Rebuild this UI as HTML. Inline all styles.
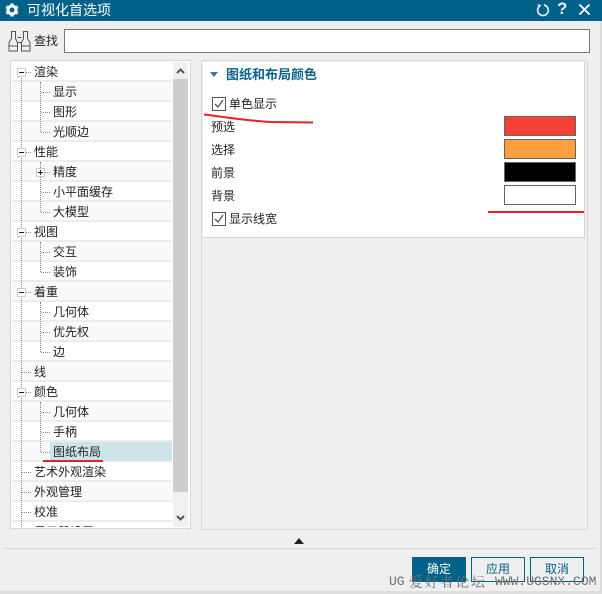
<!DOCTYPE html>
<html><head><meta charset="utf-8">
<style>
html,body{margin:0;padding:0}
body{width:602px;height:594px;overflow:hidden;position:relative;background:#efefef;font-family:"Liberation Sans","Noto Sans CJK SC",sans-serif;font-size:12px;color:#222}
.a{position:absolute}
.t{position:absolute;white-space:nowrap;line-height:16px;font-size:12px}
.row{position:absolute;left:12px;width:160px;height:18px;border-bottom:2px solid #ececec}
.sw{position:absolute;left:504px;width:70px;height:18px;border:1px solid #666}
.btn{position:absolute;top:557px;height:23px;border:1px solid #006288;line-height:23px;text-align:center;color:#006288;font-size:12px;width:52px}
.cb{position:absolute;left:212px;width:12px;height:12px;border:1px solid #555;background:#fff}
.v{position:absolute;border-left:1px dotted #888;width:0}
.h{position:absolute;border-top:1px dotted #888;height:0}
.x{position:absolute;width:7px;height:7px;border:1px solid #ccc;background:#fff;left:17px}
.x:after{content:"";position:absolute;left:1px;top:3px;width:5px;height:1px;background:#222}
.p:before{content:"";position:absolute;left:3px;top:1px;width:1px;height:5px;background:#222}
.wm{position:absolute;white-space:nowrap;color:#707070;line-height:16px;top:574px}
</style></head><body>
<div class="a" style="left:0;top:0;width:602px;height:21px;background:#006288"></div>
<svg class="a" style="left:4px;top:2px" width="16" height="16" viewBox="0 0 16 16"><circle cx="8" cy="8" r="4" fill="none" stroke="#fff" stroke-width="3"/><path d="M8 1.500v2.500M8 12v2.500M2.300 4.700l2.200 1.300M11.500 10l2.200 1.300M2.300 11.300L4.500 10M11.500 6l2.200-1.300" stroke="#fff" stroke-width="3"/></svg>
<div class="t" style="left:27px;top:1px;color:#fff;font-size:14px;line-height:18px">可视化首选项</div>
<svg class="a" style="left:535px;top:2px" width="16" height="16" viewBox="0 0 16 16"><path d="M4.500 4.200A5.300 5.300 0 1 0 9 3" fill="none" stroke="#dfeaf0" stroke-width="1.700"/><path d="M2.500 2.200l4 .8-2.600 3z" fill="#dfeaf0"/></svg>
<div class="t" style="left:557px;top:0px;color:#e8f0f4;font-size:17px;line-height:18px;font-weight:bold">?</div>
<svg class="a" style="left:578px;top:3px" width="13" height="13" viewBox="0 0 13 13"><path d="M1.500 1.500l10 10M11.500 1.500l-10 10" stroke="#fff" stroke-width="1.900"/></svg>
<div class="a" style="left:600px;top:21px;width:2px;height:573px;background:#dcdcdc"></div>
<div class="a" style="left:0;top:591px;width:602px;height:3px;background:#dedede"></div>

<svg class="a" style="left:8px;top:29px" width="25" height="24" viewBox="0 0 25 24" fill="none" stroke="#555" stroke-width="1"><path d="M3.500 2.500h4v7l2 4v8.500h-8.500v-8.500l2.500-4z"/><path d="M1 17h8.500"/><path d="M15.500 2.500h4v7l2.500 4v8.500h-8.500v-8.500l2-4z"/><path d="M13.500 17h8.500"/><path d="M9.500 8.500h4M9.500 13.500h4"/></svg>
<div class="t" style="left:34px;top:33px">查找</div>
<div class="a" style="left:64px;top:29px;width:524px;height:22px;background:#fff;border:1px solid #777"></div>

<!-- tree -->
<div class="a" style="left:10px;top:60px;width:179px;height:467px;background:#fff;border:1px solid #d8d8d8"></div>
<div class="a" style="left:173px;top:62px;width:15px;height:465px;background:#f0f0f0"></div>
<div class="a" style="left:173px;top:79px;width:15px;height:413px;background:#cdcdcd"></div>
<svg class="a" style="left:176px;top:67px" width="9" height="8" viewBox="0 0 9 8"><path d="M1 6l3.500-3.500L8 6" fill="none" stroke="#555" stroke-width="2"/></svg>
<svg class="a" style="left:176px;top:514px" width="9" height="8" viewBox="0 0 9 8"><path d="M1 2l3.500 3.500L8 2" fill="none" stroke="#555" stroke-width="2"/></svg>

<div class="row" style="top:62px"></div>
<div class="row" style="top:82px;background:#fafafa"></div>
<div class="row" style="top:102px"></div>
<div class="row" style="top:122px;background:#fafafa"></div>
<div class="row" style="top:142px"></div>
<div class="row" style="top:162px;background:#fafafa"></div>
<div class="row" style="top:182px"></div>
<div class="row" style="top:202px;background:#fafafa"></div>
<div class="row" style="top:222px"></div>
<div class="row" style="top:242px;background:#fafafa"></div>
<div class="row" style="top:262px"></div>
<div class="row" style="top:282px;background:#fafafa"></div>
<div class="row" style="top:302px"></div>
<div class="row" style="top:322px;background:#fafafa"></div>
<div class="row" style="top:342px"></div>
<div class="row" style="top:362px;background:#fafafa"></div>
<div class="row" style="top:382px"></div>
<div class="row" style="top:402px;background:#fafafa"></div>
<div class="row" style="top:422px"></div>
<div class="row" style="top:442px;background:#fafafa"></div>
<div class="row" style="top:462px"></div>
<div class="row" style="top:482px;background:#fafafa"></div>
<div class="row" style="top:502px"></div>
<div class="a" style="left:50px;top:442px;width:122px;height:19px;background:#cde4ea"></div>

<div class="v" style="left:21px;top:76px;height:451px"></div>
<div class="v" style="left:40px;top:82px;height:50px"></div>
<div class="v" style="left:40px;top:162px;height:50px"></div>
<div class="v" style="left:40px;top:242px;height:30px"></div>
<div class="v" style="left:40px;top:302px;height:50px"></div>
<div class="v" style="left:40px;top:402px;height:50px"></div>

<div class="h" style="left:26px;top:72px;width:5px"></div>
<div class="h" style="left:41px;top:92px;width:9px"></div>
<div class="h" style="left:41px;top:112px;width:9px"></div>
<div class="h" style="left:41px;top:132px;width:9px"></div>
<div class="h" style="left:26px;top:152px;width:5px"></div>
<div class="h" style="left:45px;top:172px;width:5px"></div>
<div class="h" style="left:41px;top:192px;width:9px"></div>
<div class="h" style="left:41px;top:212px;width:9px"></div>
<div class="h" style="left:26px;top:232px;width:5px"></div>
<div class="h" style="left:41px;top:252px;width:9px"></div>
<div class="h" style="left:41px;top:272px;width:9px"></div>
<div class="h" style="left:26px;top:292px;width:5px"></div>
<div class="h" style="left:41px;top:312px;width:9px"></div>
<div class="h" style="left:41px;top:332px;width:9px"></div>
<div class="h" style="left:41px;top:352px;width:9px"></div>
<div class="h" style="left:22px;top:372px;width:9px"></div>
<div class="h" style="left:26px;top:392px;width:5px"></div>
<div class="h" style="left:41px;top:412px;width:9px"></div>
<div class="h" style="left:41px;top:432px;width:9px"></div>
<div class="h" style="left:41px;top:452px;width:9px"></div>
<div class="h" style="left:22px;top:472px;width:9px"></div>
<div class="h" style="left:22px;top:492px;width:9px"></div>
<div class="h" style="left:22px;top:512px;width:9px"></div>

<div class="x" style="top:68px"></div>
<div class="x" style="top:148px"></div>
<div class="x p" style="top:168px;left:36px"></div>
<div class="x" style="top:228px"></div>
<div class="x" style="top:288px"></div>
<div class="x" style="top:388px"></div>

<div class="t" style="left:34px;top:64px">渲染</div>
<div class="t" style="left:53px;top:84px">显示</div>
<div class="t" style="left:53px;top:104px">图形</div>
<div class="t" style="left:53px;top:124px">光顺边</div>
<div class="t" style="left:34px;top:144px">性能</div>
<div class="t" style="left:53px;top:164px">精度</div>
<div class="t" style="left:53px;top:184px">小平面缓存</div>
<div class="t" style="left:53px;top:204px">大模型</div>
<div class="t" style="left:34px;top:224px">视图</div>
<div class="t" style="left:53px;top:244px">交互</div>
<div class="t" style="left:53px;top:264px">装饰</div>
<div class="t" style="left:34px;top:284px">着重</div>
<div class="t" style="left:53px;top:304px">几何体</div>
<div class="t" style="left:53px;top:324px">优先权</div>
<div class="t" style="left:53px;top:344px">边</div>
<div class="t" style="left:34px;top:364px">线</div>
<div class="t" style="left:34px;top:384px">颜色</div>
<div class="t" style="left:53px;top:404px">几何体</div>
<div class="t" style="left:53px;top:424px">手柄</div>
<div class="t" style="left:53px;top:444px">图纸布局</div>
<div class="t" style="left:34px;top:464px">艺术外观渲染</div>
<div class="t" style="left:34px;top:484px">外观管理</div>
<div class="t" style="left:34px;top:504px">校准</div>
<div class="a" style="left:34px;top:522px;width:62px;height:5px;overflow:hidden"><div class="t" style="left:0;top:2px">显示器设置</div></div>
<div class="a" style="left:43px;top:460px;width:60px;height:2px;background:#e8202c"></div>

<!-- right panel -->
<div class="a" style="left:201px;top:60px;width:385px;height:468px;border:1px solid #d8d8d8"></div>
<div class="a" style="left:203px;top:62px;width:381px;height:175px;background:#fff;border-right:1px solid #d4d4d4;border-bottom:1px solid #d4d4d4"></div>
<svg class="a" style="left:210px;top:72px" width="8" height="5" viewBox="0 0 8 5"><path d="M0 0h8L4 5z" fill="#2f7a9c"/></svg>
<div class="t" style="left:226px;top:67px;color:#0b6487;font-weight:bold;font-size:13px">图纸和布局颜色</div>
<div class="cb" style="top:97px"></div>
<svg class="a" style="left:213px;top:98px" width="12" height="12" viewBox="0 0 12 12"><path d="M2 6l3 3 5-7" fill="none" stroke="#555" stroke-width="1.300"/></svg>
<div class="t" style="left:229px;top:96px">单色显示</div>
<div class="t" style="left:211px;top:119px">预选</div>
<div class="t" style="left:211px;top:142px">选择</div>
<div class="t" style="left:211px;top:165px">前景</div>
<div class="t" style="left:211px;top:188px">背景</div>
<div class="cb" style="top:212px"></div>
<svg class="a" style="left:213px;top:213px" width="12" height="12" viewBox="0 0 12 12"><path d="M2 6l3 3 5-7" fill="none" stroke="#555" stroke-width="1.300"/></svg>
<div class="t" style="left:229px;top:211px">显示线宽</div>
<div class="sw" style="top:116px;background:#f44336"></div>
<div class="sw" style="top:139px;background:#ffa040"></div>
<div class="sw" style="top:162px;background:#000"></div>
<div class="sw" style="top:185px;background:#fff"></div>

<svg class="a" style="left:0;top:0;pointer-events:none" width="602" height="594"><path d="M204 114.500C225 117 240 120 270 122L313 122.500" fill="none" stroke="#ec1c2a" stroke-width="2"/><path d="M488 212H584" stroke="#ec1c2a" stroke-width="2"/></svg>

<svg class="a" style="left:294px;top:538px" width="10" height="6" viewBox="0 0 10 6"><path d="M0 6L5 0l5 6z" fill="#222"/></svg>
<div class="a" style="left:4px;top:548px;width:592px;height:1px;background:#d4d4d4"></div>

<div class="btn" style="left:412px;background:#006288;color:#fff">确定</div>
<div class="btn" style="left:471px">应用</div>
<div class="btn" style="left:530px">取消</div>
<div class="wm" style="left:389px;font-family:'Liberation Mono',monospace;font-size:13px">UG</div>
<div class="wm" style="left:409px;font-family:'Noto Serif CJK SC',serif;font-size:14px;letter-spacing:1.500px">爱好者论坛</div>
<div class="wm" style="left:495px;font-family:'Liberation Mono',monospace;font-size:13px">WWW.UGSNX.COM</div>
</body></html>
